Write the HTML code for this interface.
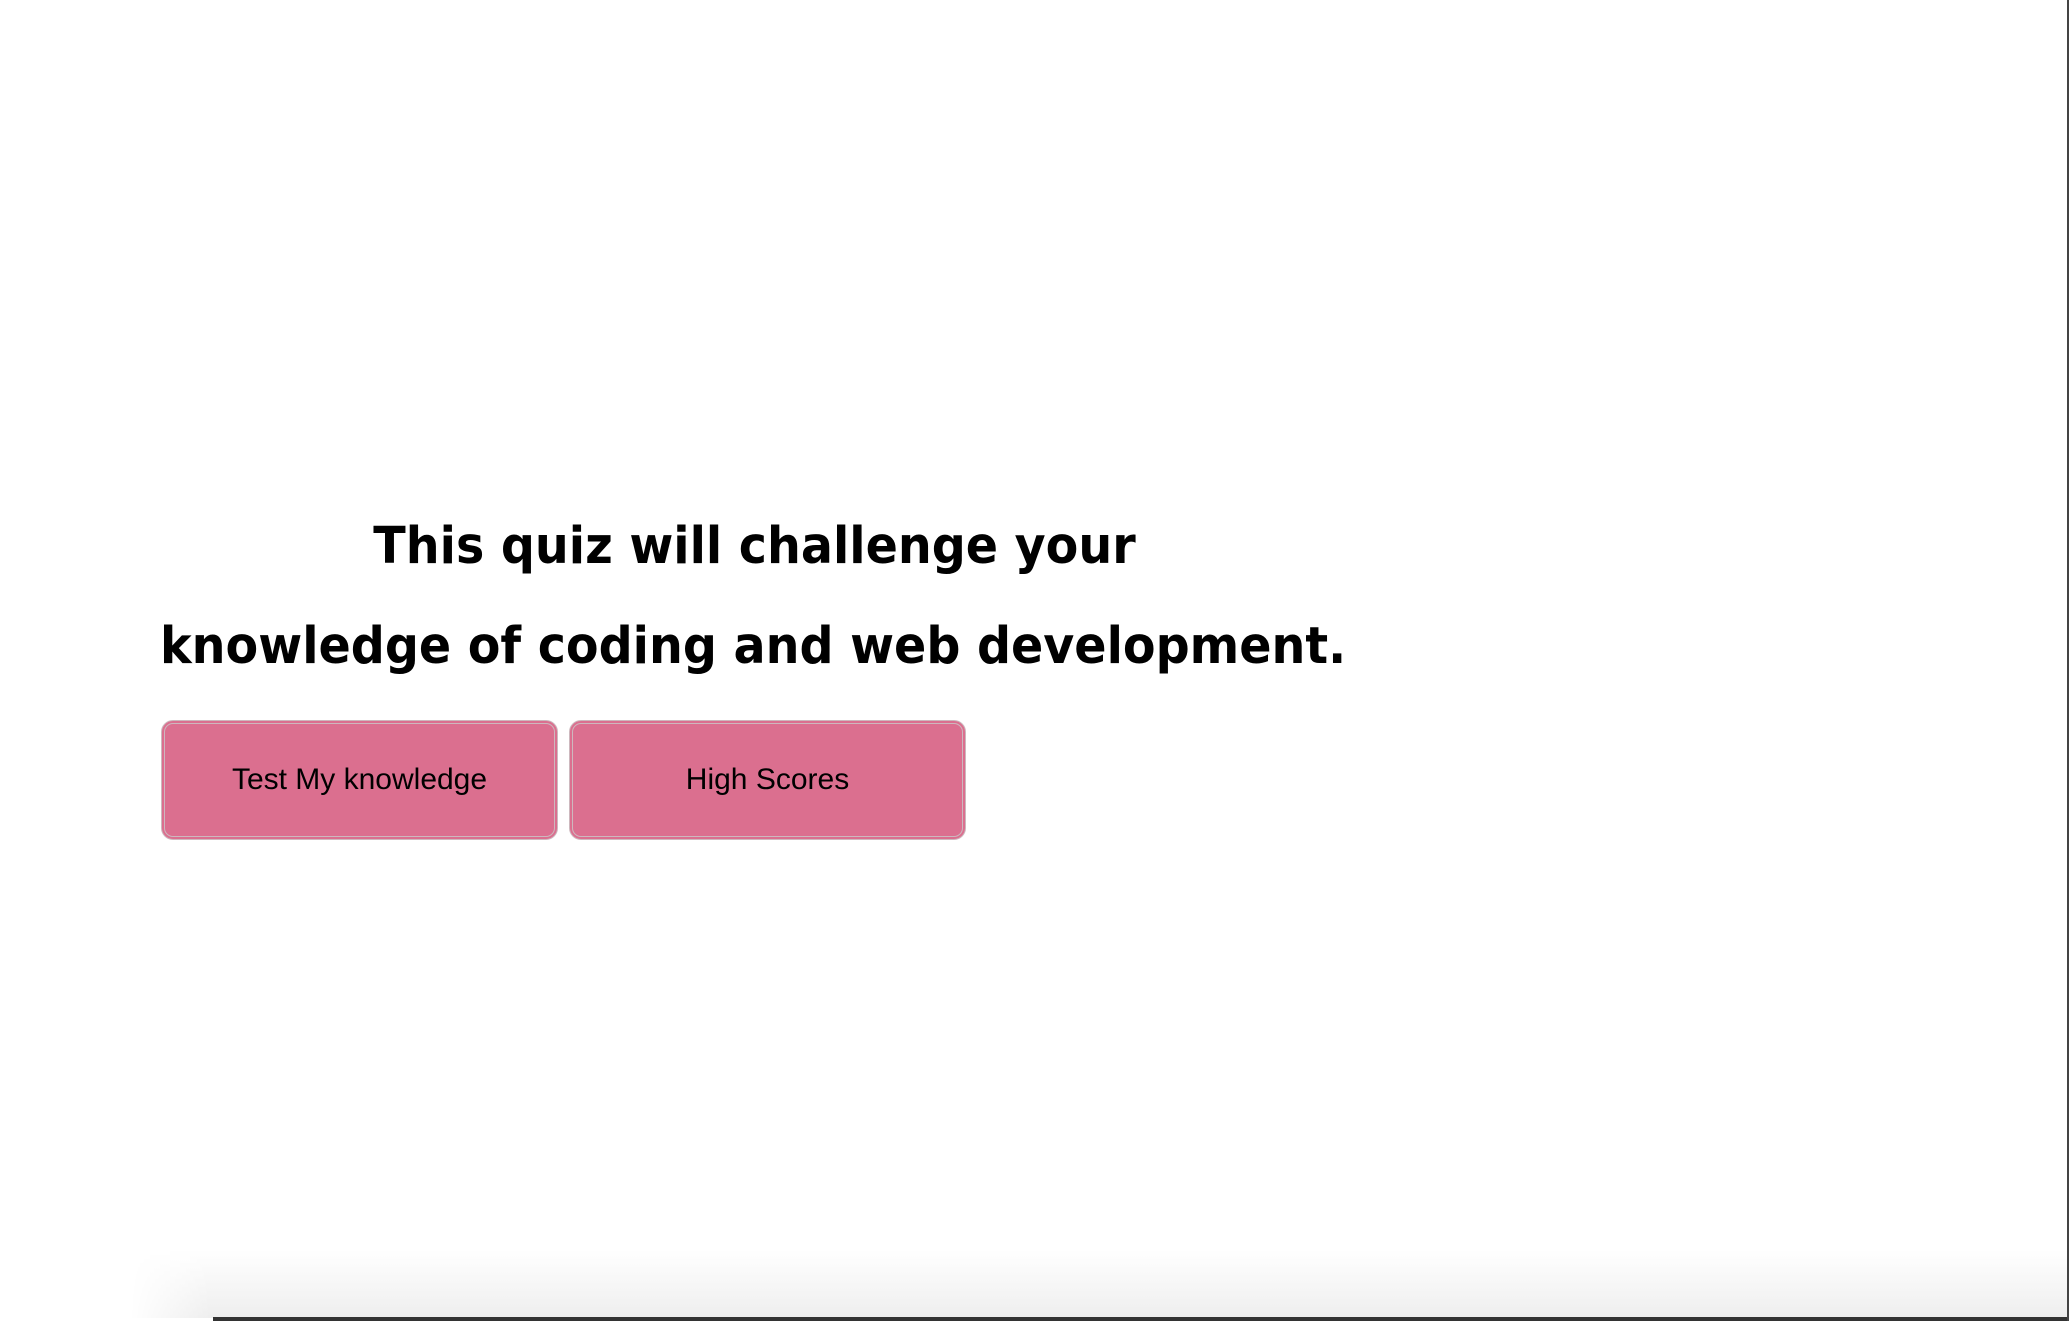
<!DOCTYPE html>
<html><head><style>
html,body{margin:0;padding:0;}
body{width:2069px;height:1321px;position:relative;overflow:hidden;background:#fff;}
.t{position:absolute;left:119px;width:1225px;text-align:center;font-family:"DejaVu Sans",Verdana,sans-serif;font-weight:bold;font-size:51px;color:#000;white-space:nowrap;line-height:60px;transform:scaleX(0.933);transform-origin:center;}
.b{position:absolute;top:720px;height:120px;box-sizing:border-box;background:#db6f8f;border:4px double #cdb8be;border-radius:12px;font-family:"Liberation Sans",Arial,sans-serif;font-size:30px;color:#000;display:flex;align-items:center;justify-content:center;}
.sh{position:absolute;left:130px;right:2px;top:1250px;height:68px;background:linear-gradient(#fff,#eee);-webkit-mask-image:linear-gradient(90deg,transparent,#000 80px);mask-image:linear-gradient(90deg,transparent,#000 80px);}
.bar{position:absolute;left:213px;right:2px;top:1317px;height:4px;background:#333;}
.rl{position:absolute;right:0;top:0;width:2px;height:1321px;background:#444;}
</style></head><body>
<div class="sh"></div>
<div class="bar"></div>
<div class="rl"></div>
<div class="t" style="top:517px;left:142px">This quiz will challenge your</div>
<div class="t" style="top:617px">knowledge of coding and web development.</div>
<div class="b" style="left:161px;width:397px">Test My knowledge</div>
<div class="b" style="left:569px;width:397px">High Scores</div>
</body></html>
